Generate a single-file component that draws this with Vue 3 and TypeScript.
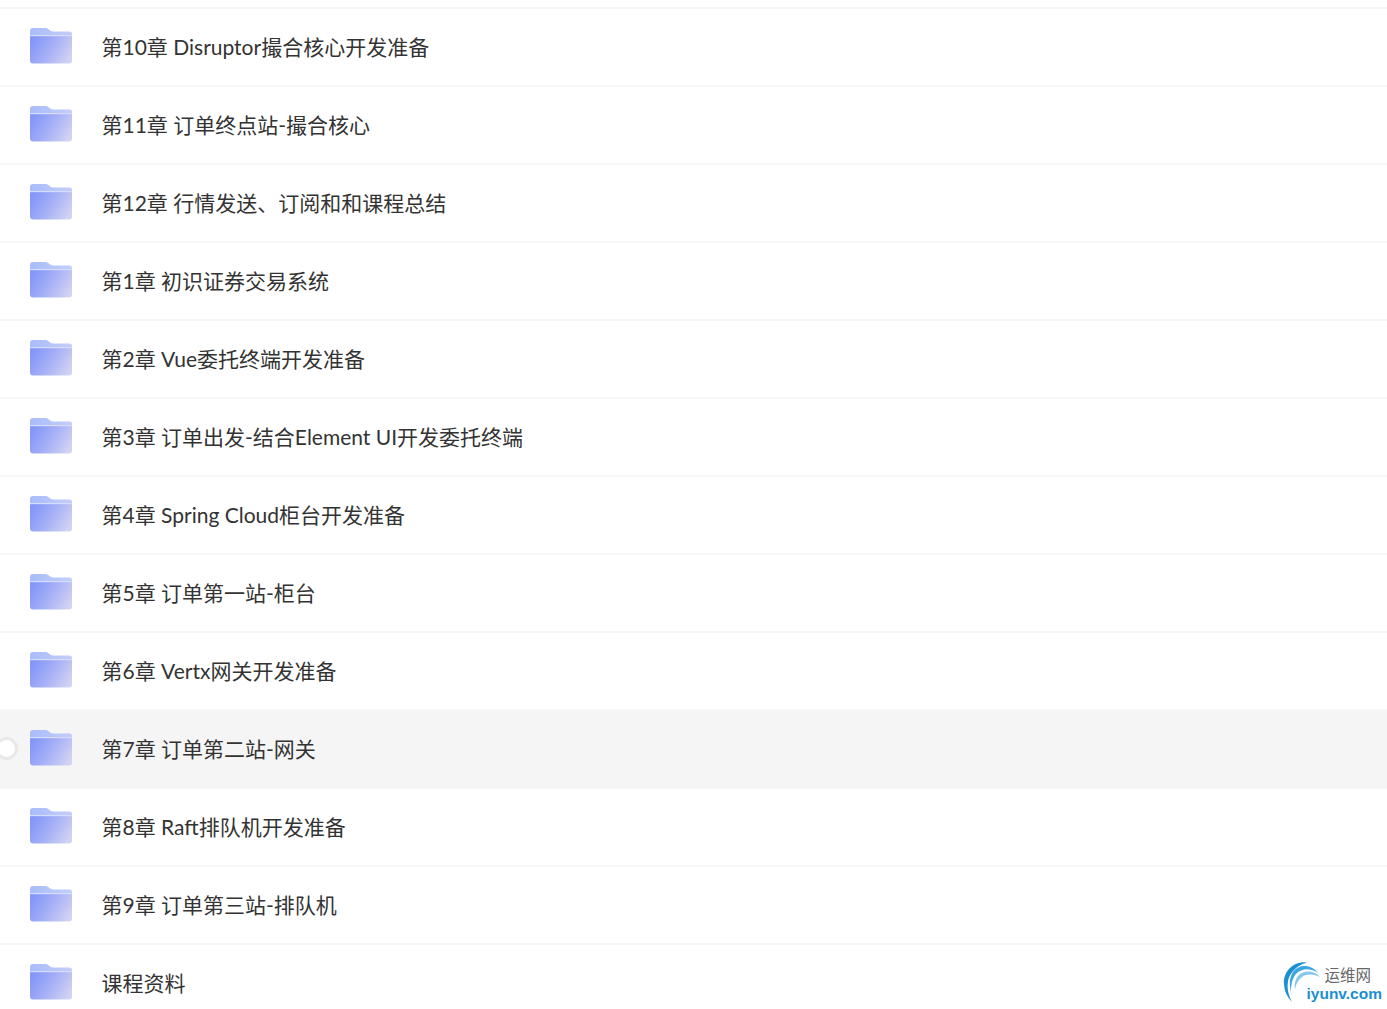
<script setup lang="ts">
const folders = [
  '第10章 Disruptor撮合核心开发准备',
  '第11章 订单终点站-撮合核心',
  '第12章 行情发送、订阅和和课程总结',
  '第1章 初识证券交易系统',
  '第2章 Vue委托终端开发准备',
  '第3章 订单出发-结合Element UI开发委托终端',
  '第4章 Spring Cloud柜台开发准备',
  '第5章 订单第一站-柜台',
  '第6章 Vertx网关开发准备',
  '第7章 订单第二站-网关',
  '第8章 Raft排队机开发准备',
  '第9章 订单第三站-排队机',
  '课程资料',
]
const hoveredIndex = 9
</script>

<template>
  <div class="page">
    <div
      v-for="(name, i) in folders"
      :key="name"
      class="row"
      :class="{ hovered: i === hoveredIndex }"
    >
      <span v-if="i === hoveredIndex" class="check" />
      <svg class="folder" width="42" height="36" viewBox="0 0 42 36">
        <defs>
          <linearGradient :id="`back-${i}`" x1="0" y1="0" x2="1" y2="0">
            <stop offset="0" stop-color="#a9bcfb" />
            <stop offset="1" stop-color="#c3cdf8" />
          </linearGradient>
          <linearGradient :id="`front-${i}`" x1="0" y1="0.3" x2="1" y2="0.7">
            <stop offset="0" stop-color="#8497f8" />
            <stop offset="0.45" stop-color="#a3aef6" />
            <stop offset="1" stop-color="#d2d2f2" />
          </linearGradient>
        </defs>
        <path
          d="M0 3a3 3 0 0 1 3-3h12c2 0 3 .6 4 1.600S21 3.500 23 3.500h16.500a2.500 2.500 0 0 1 2.500 2.500V12H0z"
          :fill="`url(#back-${i})`"
        />
        <path
          d="M0 8h42v24.500a3 3 0 0 1-3 3H3a3 3 0 0 1-3-3z"
          :fill="`url(#front-${i})`"
        />
        <rect y="7" width="42" height="1.200" fill="#d5dcfc" />
      </svg>
      <span class="name">{{ name }}</span>
    </div>
    <div class="watermark">
      <svg class="swirl" width="40" height="42" viewBox="0 0 40 42" fill="none">
        <path d="M24 1.500C10 0 0 11 1 23c.5 8 3.500 13 8 18C5 33 3.500 26 5.500 18 8 10 15 4 24 1.500z" fill="#1b8fd6" />
        <path d="M35 12C28 3 16 3 10 11 6 17 6.500 24 8 31 8 23 9.500 17 13 13 19 7 28 7 35 12z" fill="#3aa6e0" />
        <path d="M37 16C31 9 21 9 16 14 12 18 11 24 12 29 13 23 15 19 19 16 24 12.500 31 13 37 16z" fill="#86c8ec" />
      </svg>
      <div class="mark-text">
        <span class="mark-cn">运维网</span>
        <span class="mark-en">iyunv.com</span>
      </div>
    </div>
  </div>
</template>

<style scoped>
.page {
  position: relative;
  width: 1387px;
  height: 1009px;
  overflow: hidden;
  padding-top: 7px;
  box-sizing: border-box;
  background: #fff;
  font-family: "Lato", "Noto Sans CJK SC", sans-serif;
}

.row {
  position: relative;
  display: flex;
  align-items: center;
  height: 78px;
  box-sizing: border-box;
  padding-left: 30px;
  padding-bottom: 2px;
  border-top: 2px solid #f6f6f6;
}

.row.hovered {
  background: #f5f5f5;
}

.row.hovered + .row {
  border-top-color: #f5f5f5;
}

.check {
  position: absolute;
  left: -5px;
  top: 26px;
  width: 23px;
  height: 23px;
  box-sizing: border-box;
  border: 3px solid #e8e8e8;
  border-radius: 50%;
  background: #fff;
}

.folder {
  flex: none;
}

.name {
  margin-left: 29.500px;
  font-size: 21px;
  color: #333;
  white-space: nowrap;
}

.watermark {
  position: absolute;
  right: 5px;
  bottom: 7px;
  display: flex;
  align-items: flex-end;
}

.swirl {
  margin-right: -17px;
  margin-bottom: -1px;
}

.mark-text {
  display: flex;
  flex-direction: column;
  align-items: flex-end;
  gap: 2px;
  line-height: 17px;
}

.mark-cn {
  font-size: 15.500px;
  color: #666;
  margin-right: 11px;
  font-family: "Noto Sans CJK SC", sans-serif;
}

.mark-en {
  font-family: "Liberation Sans", sans-serif;
  font-size: 15.500px;
  font-weight: 700;
  color: #1b8ed0;
}
</style>
<style>
html, body {
  margin: 0;
  background: #fff;
}
</style>
